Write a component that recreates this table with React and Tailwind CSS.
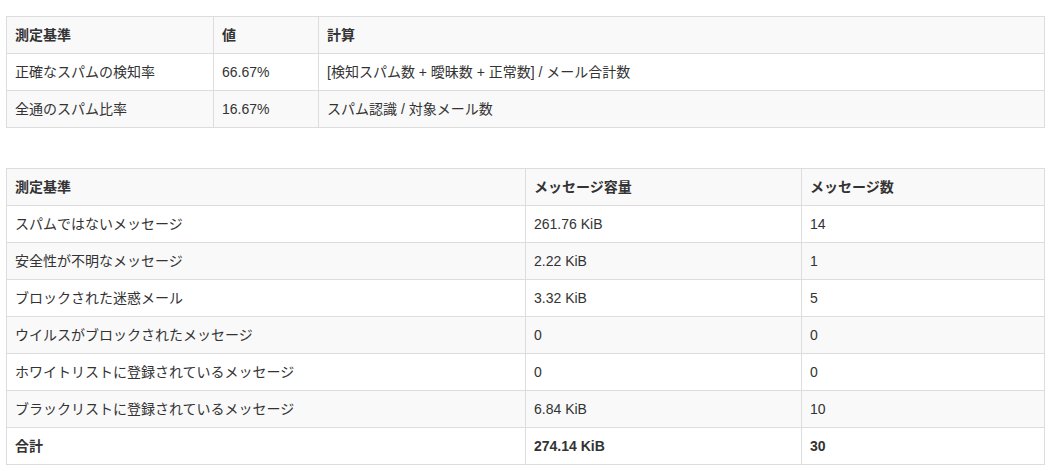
import React from "react";

const rates = [
  ["正確なスパムの検知率", "66.67%", "[検知スパム数 + 曖昧数 + 正常数] / メール合計数"],
  ["全通のスパム比率", "16.67%", "スパム認識 / 対象メール数"],
];

const messages = [
  ["スパムではないメッセージ", "261.76 KiB", "14"],
  ["安全性が不明なメッセージ", "2.22 KiB", "1"],
  ["ブロックされた迷惑メール", "3.32 KiB", "5"],
  ["ウイルスがブロックされたメッセージ", "0", "0"],
  ["ホワイトリストに登録されているメッセージ", "0", "0"],
  ["ブラックリストに登録されているメッセージ", "6.84 KiB", "10"],
];

const cell = "border border-[#ddd] px-2 py-2 text-left align-top leading-5";

const App = () => {
  return (
    <div
      className="pl-[6px] pt-4 w-[1045px] text-[14px] text-[#333] bg-white"
      style={{ fontFamily: '"Liberation Sans", "Noto Sans CJK JP", sans-serif' }}
    >
      <table className="w-[1039px] border-collapse mb-10">
        <thead>
          <tr className="bg-[#f9f9f9]">
            <th className={`${cell} w-[207px] font-bold`}>測定基準</th>
            <th className={`${cell} w-[105px] font-bold`}>値</th>
            <th className={`${cell} font-bold`}>計算</th>
          </tr>
        </thead>
        <tbody>
          {rates.map((r, i) => (
            <tr key={i} className={i % 2 ? "bg-[#f9f9f9]" : "bg-white"}>
              <td className={cell}>{r[0]}</td>
              <td className={cell}>{r[1]}</td>
              <td className={cell}>{r[2]}</td>
            </tr>
          ))}
        </tbody>
      </table>

      <table className="w-[1039px] border-collapse">
        <thead>
          <tr className="bg-[#f9f9f9]">
            <th className={`${cell} w-[519px] font-bold`}>測定基準</th>
            <th className={`${cell} w-[276px] font-bold`}>メッセージ容量</th>
            <th className={`${cell} font-bold`}>メッセージ数</th>
          </tr>
        </thead>
        <tbody>
          {messages.map((r, i) => (
            <tr key={i} className={i % 2 ? "bg-[#f9f9f9]" : "bg-white"}>
              <td className={cell}>{r[0]}</td>
              <td className={cell}>{r[1]}</td>
              <td className={cell}>{r[2]}</td>
            </tr>
          ))}
          <tr className="bg-white">
            <td className={`${cell} font-bold`}>合計</td>
            <td className={`${cell} font-bold`}>274.14 KiB</td>
            <td className={`${cell} font-bold`}>30</td>
          </tr>
        </tbody>
      </table>
    </div>
  );
};

export default App;
